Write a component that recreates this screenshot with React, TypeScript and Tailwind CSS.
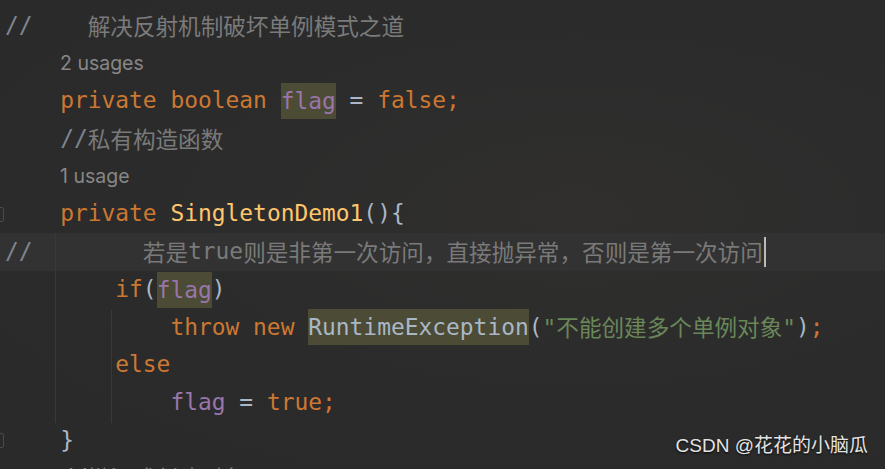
import React from "react";

const mono = "font-['DejaVu_Sans_Mono','Noto_Sans_CJK_SC',monospace] text-[22.9px]";

function Zh({ children, className = "" }: { children: React.ReactNode; className?: string }) {
  return <span className={`font-['Noto_Sans_CJK_SC',sans-serif] text-[22.6px] ${className}`}>{children}</span>;
}

const K = ({ children }: { children: React.ReactNode }) => <span className="text-[#cc7832]">{children}</span>;
const P = ({ children }: { children: React.ReactNode }) => <span className="text-[#a9b7c6]">{children}</span>;
const F = ({ children, hl = false }: { children: React.ReactNode; hl?: boolean }) => (
  <span className={`text-[#9876aa] ${hl ? "inline-block h-[36px] bg-[#4c4b35]" : ""}`}>{children}</span>
);
const C = ({ children }: { children: React.ReactNode }) => <span className="text-[#7e8590]">{children}</span>;

function Line({ children, fold = false, active = false }: { children?: React.ReactNode; fold?: boolean; active?: boolean }) {
  return (
    <div className={`flex h-[37.7px] items-center ${active ? "bg-[#323232]" : ""}`}>
      <div className="flex h-full w-[5px] shrink-0 items-center overflow-hidden">
        {fold && <div className="-ml-[6px] h-[15px] w-[10px] shrink-0 rounded-[2px] border border-[#4a4a4a]" />}
      </div>
      <div className={`flex h-full items-center whitespace-pre leading-[37.7px] ${mono}`}>{children}</div>
    </div>
  );
}

function Hint({ children }: { children: React.ReactNode }) {
  return (
    <div className="flex h-[37.7px] items-center">
      <div className="w-[60px] shrink-0" />
      <span className="font-['Inter',sans-serif] text-[19.5px] text-[#878787]">{children}</span>
    </div>
  );
}

export default function App() {
  return (
    <div className="relative h-[469px] w-[885px] overflow-hidden bg-[#2b2b2b] bg-[radial-gradient(ellipse_at_65%_45%,#302f2e_0%,#2b2b2b_55%,#2a2a2a_100%)]">
      <div className="pointer-events-none absolute left-[55px] top-[234px] h-[189px] w-px bg-[#393939]" />
      <div className="pointer-events-none absolute left-[111px] top-[310px] h-[113px] w-px bg-[#393939]" />
      <div className="flex flex-col pt-[7px]">
        <Line>
          <C>{"//    "}</C>
          <Zh className="text-[#7a7a7a]">解决反射机制破坏单例模式之道</Zh>
        </Line>
        <Hint>2 usages</Hint>
        <Line>
          <span>{"    "}</span>
          <K>private boolean </K>
          <F hl>flag</F>
          <P> = </P>
          <K>false;</K>
        </Line>
        <Line>
          <span>{"    "}</span>
          <C>//</C>
          <Zh className="text-[#7a7a7a]">私有构造函数</Zh>
        </Line>
        <Hint>1 usage</Hint>
        <Line fold>
          <span>{"    "}</span>
          <K>private </K>
          <span className="text-[#ffc66d]">SingletonDemo1</span>
          <P>{"(){"}</P>
        </Line>
        <Line active>
          <C>{"//        "}</C>
          <Zh className="text-[#7a7a7a]">若是</Zh>
          <span className="text-[#7a7a7a]">true</span>
          <Zh className="text-[#7a7a7a]">则是非第一次访问，直接抛异常，否则是第一次访问</Zh>
          <span className="ml-px inline-block h-[30px] w-[2px] bg-[#bbbbbb]" />
        </Line>
        <Line>
          <span>{"        "}</span>
          <K>if</K>
          <P>(</P>
          <F hl>flag</F>
          <P>)</P>
        </Line>
        <Line>
          <span>{"            "}</span>
          <K>throw new </K>
          <span className="inline-block h-[36px] bg-[#4c4b35] text-[#a9b7c6]">RuntimeException</span>
          <P>(</P>
          <span className="text-[#6a8759]">
            "<Zh>不能创建多个单例对象</Zh>"
          </span>
          <P>)</P>
          <K>;</K>
        </Line>
        <Line>
          <span>{"        "}</span>
          <K>else</K>
        </Line>
        <Line>
          <span>{"            "}</span>
          <F>flag</F>
          <P> = </P>
          <K>true;</K>
        </Line>
        <Line fold>
          <span>{"    "}</span>
          <P>{"}"}</P>
        </Line>
        <Line>
          <span>{"    "}</span>
          <C>//</C>
          <Zh className="text-[#7a7a7a]">懒汉式创建对象</Zh>
        </Line>
      </div>
      <div className="absolute bottom-[9px] right-[17px] font-['Liberation_Sans','Noto_Sans_CJK_SC',sans-serif] text-[19px] text-[#e4e4e4] [text-shadow:0_1px_2px_rgba(0,0,0,0.9)]">
        CSDN @花花的小脑瓜
      </div>
    </div>
  );
}
